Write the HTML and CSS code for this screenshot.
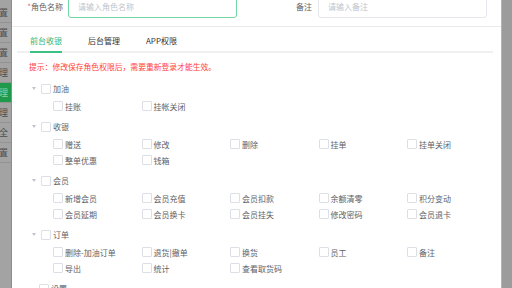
FILE: index.html
```html
<!DOCTYPE html>
<html lang="zh-CN">
<head>
    <meta charset="UTF-8">
    <meta name="viewport" content="width=device-width, initial-scale=1.0">
    <title>角色权限</title>
    <link rel="stylesheet" href="styles.css">
</head>
<body>

    <div class="page">
        <!-- dimmed side menu behind the dialog -->
        <ul class="sidebar">
            <li>置</li>
            <li>置</li>
            <li>置</li>
            <li>理</li>
            <li class="active">理</li>
            <li>理</li>
            <li>全</li>
            <li>置</li>
        </ul>

        <div class="dialog">
            <div class="form-row">
                <div class="form-item">
                    <label class="label label-name"><span class="required">*</span>角色名称</label>
                    <div class="input input-focus">请输入角色名称</div>
                </div>
                <div class="form-item">
                    <label class="label label-note">备注</label>
                    <div class="input">请输入备注</div>
                </div>
            </div>

            <div class="tabs">
                <div class="tab active">前台收银</div>
                <div class="tab">后台管理</div>
                <div class="tab">APP权限</div>
            </div>

            <p class="tip">提示：修改保存角色权限后，需要重新登录才能生效。</p>

            <div class="tree">
                <div class="group">
                    <div class="node"><span class="caret"></span><span class="box"></span>加油</div>
                    <div class="children">
                        <div class="leaf"><span class="box"></span>挂账</div>
                        <div class="leaf"><span class="box"></span>挂帐关闭</div>
                    </div>
                </div>

                <div class="group">
                    <div class="node"><span class="caret"></span><span class="box"></span>收银</div>
                    <div class="children">
                        <div class="leaf"><span class="box"></span>赠送</div>
                        <div class="leaf"><span class="box"></span>修改</div>
                        <div class="leaf"><span class="box"></span>删除</div>
                        <div class="leaf"><span class="box"></span>挂单</div>
                        <div class="leaf"><span class="box"></span>挂单关闭</div>
                        <div class="leaf"><span class="box"></span>整单优惠</div>
                        <div class="leaf"><span class="box"></span>钱箱</div>
                    </div>
                </div>

                <div class="group">
                    <div class="node"><span class="caret"></span><span class="box"></span>会员</div>
                    <div class="children">
                        <div class="leaf"><span class="box"></span>新增会员</div>
                        <div class="leaf"><span class="box"></span>会员充值</div>
                        <div class="leaf"><span class="box"></span>会员扣款</div>
                        <div class="leaf"><span class="box"></span>余额清零</div>
                        <div class="leaf"><span class="box"></span>积分变动</div>
                        <div class="leaf"><span class="box"></span>会员延期</div>
                        <div class="leaf"><span class="box"></span>会员换卡</div>
                        <div class="leaf"><span class="box"></span>会员挂失</div>
                        <div class="leaf"><span class="box"></span>修改密码</div>
                        <div class="leaf"><span class="box"></span>会员退卡</div>
                    </div>
                </div>

                <div class="group">
                    <div class="node"><span class="caret"></span><span class="box"></span>订单</div>
                    <div class="children">
                        <div class="leaf"><span class="box"></span>删除-加油订单</div>
                        <div class="leaf"><span class="box"></span>退货|撤单</div>
                        <div class="leaf"><span class="box"></span>换货</div>
                        <div class="leaf"><span class="box"></span>员工</div>
                        <div class="leaf"><span class="box"></span>备注</div>
                        <div class="leaf"><span class="box"></span>导出</div>
                        <div class="leaf"><span class="box"></span>统计</div>
                        <div class="leaf"><span class="box"></span>查看取货码</div>
                    </div>
                </div>

                <div class="group">
                    <div class="node node-empty"><span class="caret"></span><span class="box"></span>设置</div>
                </div>
            </div>
        </div>

        <div class="backdrop-right"></div>
    </div>

</body>
</html>
```

FILE: styles.css
```css
body {
    margin: 0;
    padding: 0;
    font-family: "Noto Sans CJK SC", "Noto Sans", sans-serif;
    font-size: 8px;
    color: #606266;
    background-color: #a0a0a0;
    overflow: hidden;
}

.page {
    display: flex;
    height: 288px;
}

/* dimmed menu on the left */
.sidebar {
    width: 11px;
    margin: 0;
    padding: 3px 0 0 0;
    list-style: none;
    background-color: #a3a3a3;
    border-right: 1px solid #8c8c8c;
    overflow: hidden;
}

.sidebar li {
    height: 19px;
    line-height: 19px;
    border-bottom: 1px solid #939393;
    color: #4e4e4e;
    font-size: 9px;
    text-indent: -1px;
}

.sidebar li.active {
    background-color: #1f9a4c;
    color: #8fcfa4;
}

.dialog {
    flex: 1;
    background-color: #fff;
    overflow: hidden;
}

.backdrop-right {
    width: 10px;
    background-color: #9c9c9c;
    border-left: 1px solid #b4b4b4;
}

/* form header */
.form-row {
    display: flex;
    align-items: flex-start;
    height: 32px;
    margin-top: -5px;
    padding-left: 5px;
    border-bottom: 1px solid #ebebeb;
    box-sizing: border-box;
}

.form-item {
    display: flex;
    align-items: center;
}

.label {
    text-align: right;
    color: #606266;
    line-height: 23px;
    box-sizing: border-box;
}

.label-name {
    width: 51px;
    padding-right: 5px;
}

.label-note {
    width: 81px;
    padding-right: 6px;
}

.required {
    color: #f56c6c;
}

.input {
    width: 169px;
    height: 23px;
    line-height: 22px;
    padding-left: 9px;
    border: 1px solid #e4e7ed;
    border-radius: 3px;
    color: #c0c4cc;
    box-sizing: border-box;
}

.input-focus {
    border-color: #72d9a2;
}

/* tabs */
.tabs {
    display: flex;
    height: 24px;
    margin: 0 8px 0 5px;
    padding-left: 13px;
    border-bottom: 2px solid #f0f0f0;
}

.tab {
    height: 26px;
    line-height: 27px;
    margin-right: 26px;
    color: #303133;
    box-sizing: border-box;
}

.tab.active {
    color: #2fb57a;
    border-bottom: 2px solid #3cc083;
}

.tip {
    margin: 9px 0 7px 17px;
    line-height: 10px;
    font-size: 7.8px;
    color: #ff3f3f;
}

/* permission tree */
.tree {
    margin-left: 5px;
}

.group {
    margin-bottom: 3px;
}

.node {
    display: flex;
    align-items: center;
    height: 19px;
    padding-left: 13px;
}

.caret {
    width: 11px;
    height: 19px;
    display: flex;
    align-items: center;
}

.caret::before {
    content: "";
    margin-left: 2px;
    border-left: 2.5px solid transparent;
    border-right: 2.5px solid transparent;
    border-top: 3px solid #c0c4cc;
}

.node-empty .caret {
    width: 9px;
}

.node-empty .caret::before {
    border-top-color: transparent;
}

.box {
    width: 10px;
    height: 10px;
    margin-right: 2px;
    border: 1px solid #dcdfe6;
    border-radius: 1px;
    background-color: #fff;
    box-sizing: border-box;
}

.children {
    display: grid;
    grid-template-columns: repeat(5, 88.5px);
    padding-left: 36px;
}

.leaf {
    display: flex;
    align-items: center;
    height: 16px;
    white-space: nowrap;
}
```
